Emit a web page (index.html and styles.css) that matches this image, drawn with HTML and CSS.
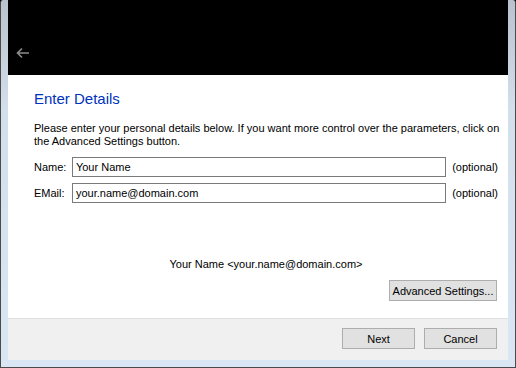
FILE: index.html
```html
<!DOCTYPE html>
<html>
<head>
<meta charset="utf-8">
<link rel="stylesheet" href="styles.css">
</head>
<body>
<div class="window">
  <div class="content">
    <header class="header">
      <svg class="back" width="14" height="12" viewBox="0 0 14 12">
        <path d="M1.5 6 H13 M6 1.5 L1.5 6 L6 10.5" fill="none" stroke="#8c8c8c" stroke-width="1.6"/>
      </svg>
    </header>
    <main class="body">
      <h1 class="title">Enter Details</h1>
      <p class="intro">Please enter your personal details below. If you want more control over the parameters, click on<br>the Advanced Settings button.</p>
      <div class="form">
        <div class="row">
          <label class="label">Name:</label>
          <div class="input">Your Name</div>
          <span class="opt">(optional)</span>
        </div>
        <div class="row">
          <label class="label">EMail:</label>
          <div class="input">your.name@domain.com</div>
          <span class="opt">(optional)</span>
        </div>
      </div>
      <div class="preview">Your Name &lt;your.name@domain.com&gt;</div>
      <div class="adv-row"><button class="btn adv">Advanced Settings...</button></div>
    </main>
    <footer class="footer">
      <button class="btn nav">Next</button>
      <button class="btn nav">Cancel</button>
    </footer>
  </div>
</div>
</body>
</html>
```
FILE: styles.css
```css
* { box-sizing: border-box; }
html, body { margin: 0; padding: 0; background: #000; }
body {
  font-family: "Liberation Sans", Arial, sans-serif;
  font-size: 11px;
  color: #000;
}
.window {
  width: 516px;
  height: 368px;
  border: 1px solid #4b4b4b;
  border-top: none;
  border-radius: 3px 3px 0 0;
  padding: 0 7px 7px 7px;
  background: linear-gradient(#b9c3cd 0%, #d3dfeb 30%, #dae6f3 100%);
}
.content {
  height: 360px;
  display: flex;
  flex-direction: column;
  background: #fff;
}
.header {
  height: 75px;
  background: #000;
  display: flex;
  align-items: flex-end;
  padding: 0 0 16px 8px;
}
.back { display: block; }
.body {
  flex: 1;
  padding: 14px 10px 0 26px;
  display: flex;
  flex-direction: column;
}
.title {
  margin: 0;
  font-size: 15px;
  font-weight: normal;
  color: #0033bb;
  line-height: 20px;
}
.intro {
  margin: 13px 0 0 0;
  line-height: 13px;
  white-space: nowrap;
}
.form {
  margin-top: 9px;
  display: flex;
  flex-direction: column;
  gap: 6px;
}
.row {
  display: flex;
  align-items: center;
  height: 20px;
}
.label { width: 38px; }
.input {
  width: 375px;
  height: 20px;
  border: 1px solid #7a7a7a;
  padding: 0 3px;
  line-height: 18px;
}
.opt { margin-left: 6px; }
.preview {
  margin-top: 54px;
  text-align: center;
  line-height: 14px;
}
.adv-row {
  margin-top: 9px;
  display: flex;
  justify-content: flex-end;
  padding-right: 1px;
}
.btn {
  font-family: inherit;
  font-size: 11px;
  color: #000;
  background: #e1e1e1;
  border: 1px solid #adadad;
  height: 21px;
  padding: 0;
  margin: 0;
}
.adv { width: 108px; }
.footer {
  height: 42px;
  background: #f0f0f0;
  border-top: 1px solid #dfdfdf;
  display: flex;
  justify-content: flex-end;
  align-items: flex-start;
  gap: 9px;
  padding: 9px 11px 0 0;
}
.nav { width: 73px; }
```
